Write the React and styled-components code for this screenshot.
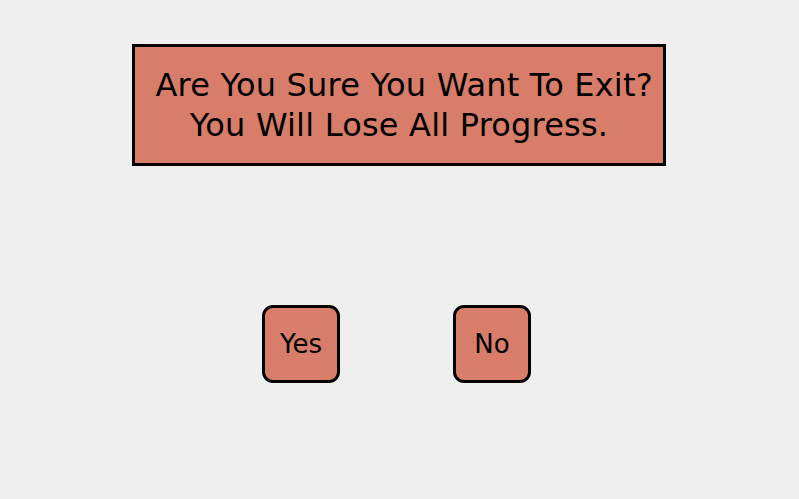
import React from 'react'
import styled, { createGlobalStyle } from 'styled-components'

const GlobalStyle = createGlobalStyle`
    html, body {
        margin: 0;
        padding: 0;
        background: #efefef;
        font-family: "DejaVu Sans", "Noto Sans", sans-serif;
    }
`

const Page = styled.div`
    width: 799px;
    height: 499px;
    display: flex;
    flex-direction: column;
    align-items: center;
    padding-top: 44px;
    padding-right: 1px;
    box-sizing: border-box;
`

const Message = styled.div`
    width: 534px;
    height: 122px;
    box-sizing: border-box;
    background: #d87d6a;
    border: 3px solid #000;
    display: flex;
    flex-direction: column;
    align-items: center;
    justify-content: center;
    font-size: 32px;
    line-height: 40px;
    letter-spacing: 0.2px;
    color: #000;
    white-space: nowrap;
    p {
        margin: 0;
    }
`

const Choices = styled.div`
    margin-top: 139px;
    display: flex;
    gap: 113px;
    padding-right: 5px;
`

const ChoiceButton = styled.button`
    width: 78px;
    height: 78px;
    box-sizing: border-box;
    background: #d87d6a;
    border: 3px solid #000;
    border-radius: 11px;
    font-family: inherit;
    font-size: 26px;
    color: #000;
    cursor: pointer;
    padding: 0;
`

export default function App() {
    return (
        <>
            <GlobalStyle />
            <Page>
                <Message>
                    <p>&nbsp;Are You Sure You Want To Exit?</p>
                    <p>You Will Lose All Progress.</p>
                </Message>
                <Choices>
                    <ChoiceButton>Yes</ChoiceButton>
                    <ChoiceButton>No</ChoiceButton>
                </Choices>
            </Page>
        </>
    )
}
